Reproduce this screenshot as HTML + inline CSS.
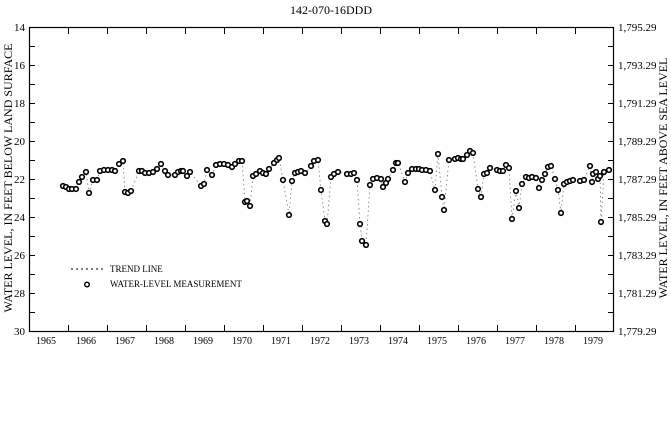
<!DOCTYPE html>
<html><head><meta charset="utf-8"><style>
html,body{margin:0;padding:0;background:#fff;width:671px;height:446px;overflow:hidden}
svg{display:block}
text{font-family:"Liberation Serif",serif;fill:#000}
</style></head><body>
<svg width="671" height="446" viewBox="0 0 671 446" xmlns="http://www.w3.org/2000/svg">
<text x="331" y="14" font-size="12" text-anchor="middle">142-070-16DDD</text>
<rect x="29.5" y="27.5" width="584" height="304" fill="none" stroke="#000" stroke-width="1.2"/>
<g stroke="#000" stroke-width="1">
<path d="M68.5 28v6M107.5 28v6M146.5 28v6M185.5 28v6M224.5 28v6M263.5 28v6M302.5 28v6M341.5 28v6M380.5 28v6M419.5 28v6M458.5 28v6M497.5 28v6M536.5 28v6M575.5 28v6"/>
<path d="M68.5 331v-6M107.5 331v-6M146.5 331v-6M185.5 331v-6M224.5 331v-6M263.5 331v-6M302.5 331v-6M341.5 331v-6M380.5 331v-6M419.5 331v-6M458.5 331v-6M497.5 331v-6M536.5 331v-6M575.5 331v-6"/>
<path d="M30 46.5h5M30 65.5h5M30 84.5h5M30 103.5h5M30 122.5h5M30 141.5h5M30 160.5h5M30 179.5h5M30 198.5h5M30 217.5h5M30 236.5h5M30 255.5h5M30 274.5h5M30 293.5h5M30 312.5h5"/>
<path d="M613 46.5h-5M613 65.5h-5M613 84.5h-5M613 103.5h-5M613 122.5h-5M613 141.5h-5M613 160.5h-5M613 179.5h-5M613 198.5h-5M613 217.5h-5M613 236.5h-5M613 255.5h-5M613 274.5h-5M613 293.5h-5M613 312.5h-5"/>
</g>
<g font-size="11" text-anchor="end">
<text x="25" y="31">14</text><text x="25" y="69">16</text><text x="25" y="107">18</text><text x="25" y="145">20</text><text x="25" y="183">22</text><text x="25" y="221">24</text><text x="25" y="259">26</text><text x="25" y="297">28</text><text x="25" y="335">30</text>
</g>
<g font-size="11">
<text x="618" y="31">1,795.29</text><text x="618" y="69">1,793.29</text><text x="618" y="107">1,791.29</text><text x="618" y="145">1,789.29</text><text x="618" y="183">1,787.29</text><text x="618" y="221">1,785.29</text><text x="618" y="259">1,783.29</text><text x="618" y="297">1,781.29</text><text x="618" y="335">1,779.29</text>
</g>
<g font-size="10" text-anchor="middle">
<text x="46" y="344">1965</text><text x="86" y="344">1966</text><text x="125" y="344">1967</text><text x="164" y="344">1968</text><text x="203" y="344">1969</text><text x="242" y="344">1970</text><text x="281" y="344">1971</text><text x="320" y="344">1972</text><text x="359" y="344">1973</text><text x="398" y="344">1974</text><text x="437" y="344">1975</text><text x="476" y="344">1976</text><text x="515" y="344">1977</text><text x="554" y="344">1978</text><text x="593" y="344">1979</text>
</g>
<text transform="translate(12,178) rotate(-90)" font-size="12" text-anchor="middle">WATER LEVEL, IN FEET BELOW LAND SURFACE</text>
<text transform="translate(667,178) rotate(-90)" font-size="12" text-anchor="middle">WATER LEVEL, IN FEET ABOVE SEA LEVEL</text>
<line x1="71" y1="269" x2="104" y2="269" stroke="#000" stroke-width="1" stroke-dasharray="2,3"/>
<text x="110" y="272" font-size="9">TREND LINE</text>
<circle cx="87" cy="284.5" r="2.3" fill="#fff" stroke="#000" stroke-width="1.5"/>
<text x="110" y="287" font-size="9">WATER-LEVEL MEASUREMENT</text>
<polyline fill="none" stroke="#777" stroke-width="0.8" stroke-dasharray="1.5,3" points="63,186 66,187 69,189 72,189 76,189 79,182 82,177 86,172 89,193 93,180 97,180 100,171 104,170 108,170 112,170 115,171 119,164 123,161 125,192 128,193 131,191 139,171 142,171 145,173 149,173 153,172 157,169 161,164 165,171 168,175 175,175 178,172 181,171 183,171 187,176 190,172 201,186 204,184 207,170 212,175 216,165 220,164 224,164 228,165 232,167 235,164 239,161 242,161 245,202 247,201 250,206 253,176 256,174 260,171 263,173 266,174 269,169 274,163 277,160 279,158 283,180 289,215 292,181 295,173 298,172 301,171 305,173 311,166 314,161 318,160 321,190 325,221 327,224 331,177 334,174 338,172 347,174 351,174 354,173 357,180 360,224 362,241 366,245 370,185 373,179 377,178 381,179 383,187 386,183 388,179 393,170 396,163 398,163 405,182 408,173 412,169 416,169 419,169 422,170 426,170 430,171 435,190 438,154 442,197 444,210 449,160 455,159 458,158 461,159 463,159 467,155 470,151 473,153 478,189 481,197 484,174 487,173 490,168 497,170 500,171 503,171 506,165 509,168 512,219 516,191 519,208 522,184 526,177 529,178 532,177 536,178 539,188 542,180 545,174 548,167 551,166 555,179 558,190 561,213 564,184 567,182 570,181 573,180 580,181 584,180 590,166 592,182 593,174 596,172 598,179 600,176 601,222 604,172 609,170"/>
<g fill="#fff" stroke="#000" stroke-width="1.6">
<circle cx="63" cy="186" r="2.3"/><circle cx="66" cy="187" r="2.3"/><circle cx="69" cy="189" r="2.3"/><circle cx="72" cy="189" r="2.3"/><circle cx="76" cy="189" r="2.3"/><circle cx="79" cy="182" r="2.3"/><circle cx="82" cy="177" r="2.3"/><circle cx="86" cy="172" r="2.3"/><circle cx="89" cy="193" r="2.3"/><circle cx="93" cy="180" r="2.3"/><circle cx="97" cy="180" r="2.3"/><circle cx="100" cy="171" r="2.3"/><circle cx="104" cy="170" r="2.3"/><circle cx="108" cy="170" r="2.3"/><circle cx="112" cy="170" r="2.3"/><circle cx="115" cy="171" r="2.3"/><circle cx="119" cy="164" r="2.3"/><circle cx="123" cy="161" r="2.3"/><circle cx="125" cy="192" r="2.3"/><circle cx="128" cy="193" r="2.3"/><circle cx="131" cy="191" r="2.3"/><circle cx="139" cy="171" r="2.3"/><circle cx="142" cy="171" r="2.3"/><circle cx="145" cy="173" r="2.3"/><circle cx="149" cy="173" r="2.3"/><circle cx="153" cy="172" r="2.3"/><circle cx="157" cy="169" r="2.3"/><circle cx="161" cy="164" r="2.3"/><circle cx="165" cy="171" r="2.3"/><circle cx="168" cy="175" r="2.3"/><circle cx="175" cy="175" r="2.3"/><circle cx="178" cy="172" r="2.3"/><circle cx="181" cy="171" r="2.3"/><circle cx="183" cy="171" r="2.3"/><circle cx="187" cy="176" r="2.3"/><circle cx="190" cy="172" r="2.3"/><circle cx="201" cy="186" r="2.3"/><circle cx="204" cy="184" r="2.3"/><circle cx="207" cy="170" r="2.3"/><circle cx="212" cy="175" r="2.3"/><circle cx="216" cy="165" r="2.3"/><circle cx="220" cy="164" r="2.3"/><circle cx="224" cy="164" r="2.3"/><circle cx="228" cy="165" r="2.3"/><circle cx="232" cy="167" r="2.3"/><circle cx="235" cy="164" r="2.3"/><circle cx="239" cy="161" r="2.3"/><circle cx="242" cy="161" r="2.3"/><circle cx="245" cy="202" r="2.3"/><circle cx="247" cy="201" r="2.3"/><circle cx="250" cy="206" r="2.3"/><circle cx="253" cy="176" r="2.3"/><circle cx="256" cy="174" r="2.3"/><circle cx="260" cy="171" r="2.3"/><circle cx="263" cy="173" r="2.3"/><circle cx="266" cy="174" r="2.3"/><circle cx="269" cy="169" r="2.3"/><circle cx="274" cy="163" r="2.3"/><circle cx="277" cy="160" r="2.3"/><circle cx="279" cy="158" r="2.3"/><circle cx="283" cy="180" r="2.3"/><circle cx="289" cy="215" r="2.3"/><circle cx="292" cy="181" r="2.3"/><circle cx="295" cy="173" r="2.3"/><circle cx="298" cy="172" r="2.3"/><circle cx="301" cy="171" r="2.3"/><circle cx="305" cy="173" r="2.3"/><circle cx="311" cy="166" r="2.3"/><circle cx="314" cy="161" r="2.3"/><circle cx="318" cy="160" r="2.3"/><circle cx="321" cy="190" r="2.3"/><circle cx="325" cy="221" r="2.3"/><circle cx="327" cy="224" r="2.3"/><circle cx="331" cy="177" r="2.3"/><circle cx="334" cy="174" r="2.3"/><circle cx="338" cy="172" r="2.3"/><circle cx="347" cy="174" r="2.3"/><circle cx="351" cy="174" r="2.3"/><circle cx="354" cy="173" r="2.3"/><circle cx="357" cy="180" r="2.3"/><circle cx="360" cy="224" r="2.3"/><circle cx="362" cy="241" r="2.3"/><circle cx="366" cy="245" r="2.3"/><circle cx="370" cy="185" r="2.3"/><circle cx="373" cy="179" r="2.3"/><circle cx="377" cy="178" r="2.3"/><circle cx="381" cy="179" r="2.3"/><circle cx="383" cy="187" r="2.3"/><circle cx="386" cy="183" r="2.3"/><circle cx="388" cy="179" r="2.3"/><circle cx="393" cy="170" r="2.3"/><circle cx="396" cy="163" r="2.3"/><circle cx="398" cy="163" r="2.3"/><circle cx="405" cy="182" r="2.3"/><circle cx="408" cy="173" r="2.3"/><circle cx="412" cy="169" r="2.3"/><circle cx="416" cy="169" r="2.3"/><circle cx="419" cy="169" r="2.3"/><circle cx="422" cy="170" r="2.3"/><circle cx="426" cy="170" r="2.3"/><circle cx="430" cy="171" r="2.3"/><circle cx="435" cy="190" r="2.3"/><circle cx="438" cy="154" r="2.3"/><circle cx="442" cy="197" r="2.3"/><circle cx="444" cy="210" r="2.3"/><circle cx="449" cy="160" r="2.3"/><circle cx="455" cy="159" r="2.3"/><circle cx="458" cy="158" r="2.3"/><circle cx="461" cy="159" r="2.3"/><circle cx="463" cy="159" r="2.3"/><circle cx="467" cy="155" r="2.3"/><circle cx="470" cy="151" r="2.3"/><circle cx="473" cy="153" r="2.3"/><circle cx="478" cy="189" r="2.3"/><circle cx="481" cy="197" r="2.3"/><circle cx="484" cy="174" r="2.3"/><circle cx="487" cy="173" r="2.3"/><circle cx="490" cy="168" r="2.3"/><circle cx="497" cy="170" r="2.3"/><circle cx="500" cy="171" r="2.3"/><circle cx="503" cy="171" r="2.3"/><circle cx="506" cy="165" r="2.3"/><circle cx="509" cy="168" r="2.3"/><circle cx="512" cy="219" r="2.3"/><circle cx="516" cy="191" r="2.3"/><circle cx="519" cy="208" r="2.3"/><circle cx="522" cy="184" r="2.3"/><circle cx="526" cy="177" r="2.3"/><circle cx="529" cy="178" r="2.3"/><circle cx="532" cy="177" r="2.3"/><circle cx="536" cy="178" r="2.3"/><circle cx="539" cy="188" r="2.3"/><circle cx="542" cy="180" r="2.3"/><circle cx="545" cy="174" r="2.3"/><circle cx="548" cy="167" r="2.3"/><circle cx="551" cy="166" r="2.3"/><circle cx="555" cy="179" r="2.3"/><circle cx="558" cy="190" r="2.3"/><circle cx="561" cy="213" r="2.3"/><circle cx="564" cy="184" r="2.3"/><circle cx="567" cy="182" r="2.3"/><circle cx="570" cy="181" r="2.3"/><circle cx="573" cy="180" r="2.3"/><circle cx="580" cy="181" r="2.3"/><circle cx="584" cy="180" r="2.3"/><circle cx="590" cy="166" r="2.3"/><circle cx="592" cy="182" r="2.3"/><circle cx="593" cy="174" r="2.3"/><circle cx="596" cy="172" r="2.3"/><circle cx="598" cy="179" r="2.3"/><circle cx="600" cy="176" r="2.3"/><circle cx="601" cy="222" r="2.3"/><circle cx="604" cy="172" r="2.3"/><circle cx="609" cy="170" r="2.3"/>
</g>
</svg>
</body></html>
